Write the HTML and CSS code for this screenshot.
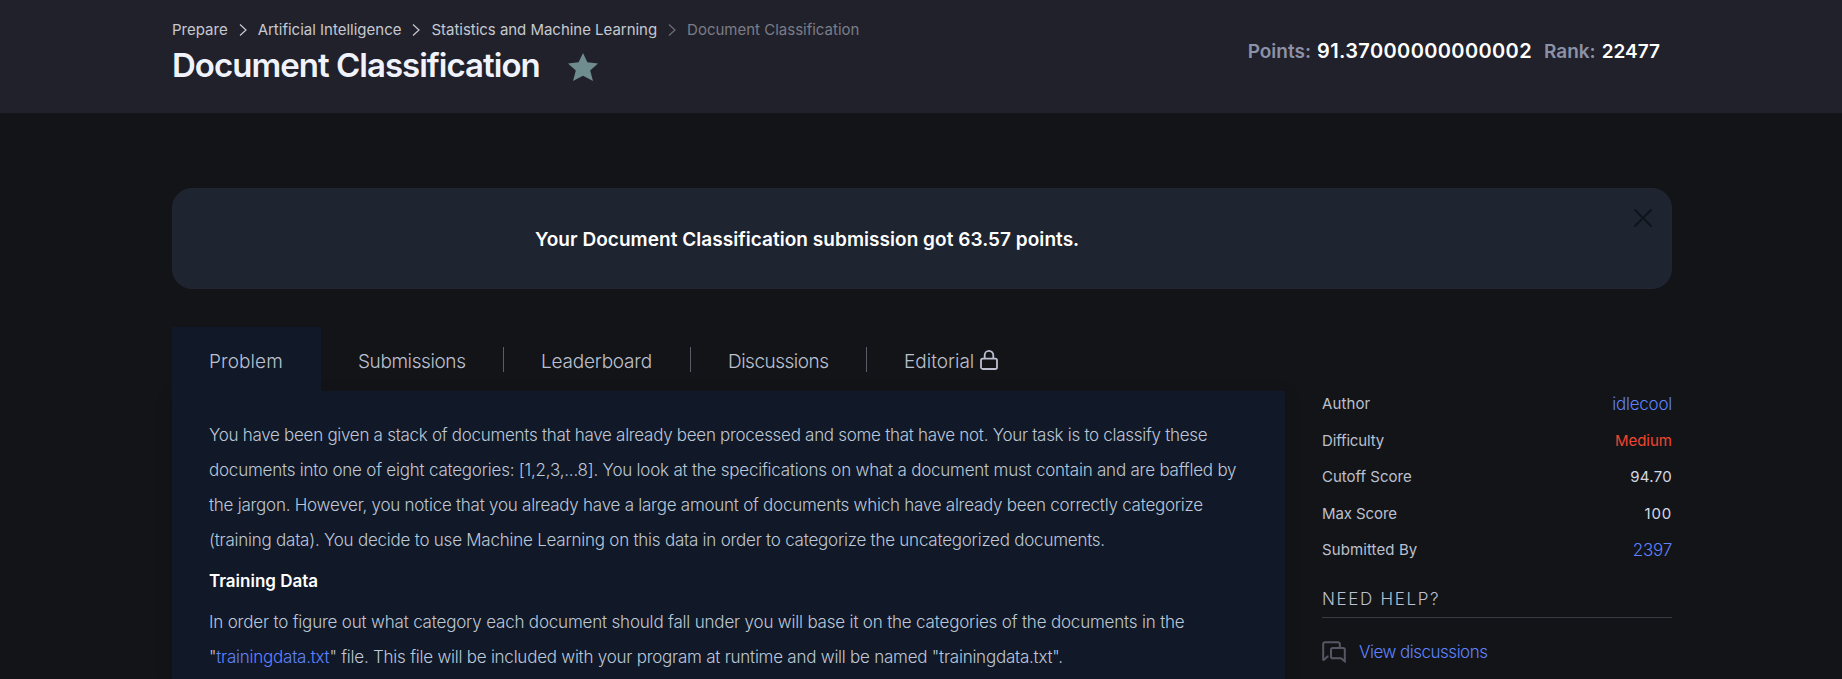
FILE: index.html
```html
<!DOCTYPE html>
<html lang="en">
<head>
<meta charset="utf-8">
<title>Document Classification</title>
<link rel="stylesheet" href="styles.css">
</head>
<body>
<header class="header">
  <div class="wrap header-row">
    <div>
      <nav class="crumbs">
        <a>Prepare</a>
        <svg class="chev" viewBox="0 0 8 12"><path d="M1 .5 7 6 1 11.5"/></svg>
        <a>Artificial Intelligence</a>
        <svg class="chev" viewBox="0 0 8 12"><path d="M1 .5 7 6 1 11.5"/></svg>
        <a class="c3">Statistics and Machine Learning</a>
        <svg class="chev dim" viewBox="0 0 8 12"><path d="M1 .5 7 6 1 11.5"/></svg>
        <span class="dim">Document Classification</span>
      </nav>
      <div class="title-row">
        <h1 class="title">Document Classification</h1>
        <svg class="star" viewBox="0 0 30 28"><path d="M15 0 19.4 9.3 30 10.5 22.2 17.6 25 28 15 22.8 5 28 7.8 17.6 0 10.5 10.6 9.3Z"/></svg>
      </div>
    </div>
    <div class="stats">
      <span class="stat-label">Points:</span><span class="stat-value points">91.37000000000002</span>
      <span class="stat-label">Rank:</span><span class="stat-value">22477</span>
    </div>
  </div>
</header>
<main class="wrap">
  <section class="banner">
    <p class="banner-text">Your Document Classification submission got 63.57 points.</p>
    <svg class="close" viewBox="0 0 20 20"><path d="M2 2 18 18M18 2 2 18"/></svg>
  </section>
  <div class="tabs">
    <a class="tab active t1">Problem</a>
    <a class="tab t2">Submissions</a>
    <a class="tab t3">Leaderboard</a>
    <a class="tab t4">Discussions</a>
    <a class="tab t5">Editorial<svg class="lock" viewBox="0 0 18 20"><rect x="1" y="8.7" width="16" height="10.3" rx="1.8"/><path d="M4.7 8.5V5.2a4.3 4.3 0 0 1 8.6 0v3.3"/></svg></a>
  </div>
  <div class="columns">
    <article class="panel">
      <p><span class="l1">You have been given a stack of documents that have already been processed and some that have not. Your task is to classify these</span>
      <span class="l2">documents into one of eight categories: [1,2,3,...8]. You look at the specifications on what a document must contain and are baffled by</span>
      <span class="l3">the jargon. However, you notice that you already have a large amount of documents which have already been correctly categorize</span>
      <span class="l4">(training data). You decide to use Machine Learning on this data in order to categorize the uncategorized documents.</span></p>
      <h2 class="subhead">Training Data</h2>
      <p><span class="l5">In order to figure out what category each document should fall under you will base it on the categories of the documents in the</span>
      <span class="l6">"<a class="link">trainingdata.txt</a>" file. This file will be included with your program at runtime and will be named "trainingdata.txt".</span></p>
    </article>
    <aside class="side">
      <dl class="facts">
        <div><dt class="f1">Author</dt><dd class="link big">idlecool</dd></div>
        <div><dt class="f2">Difficulty</dt><dd class="medium">Medium</dd></div>
        <div><dt>Cutoff Score</dt><dd class="score">94.70</dd></div>
        <div><dt class="f4">Max Score</dt><dd class="max">100</dd></div>
        <div><dt class="f1">Submitted By</dt><dd class="link big">2397</dd></div>
      </dl>
      <h3 class="help">NEED HELP?</h3>
      <a class="discuss link"><svg class="chat" viewBox="0 0 24 22"><path d="M1.2 19.5V3.2Q1.2 1.2 3.2 1.2H15.8Q17.8 1.2 17.8 3.2V6M1.2 19.5 5.5 15.5H6.5M10.8 6.9H21Q22.8 6.9 22.8 8.7V20.3L19 17.2H10.8Q9 17.2 9 15.4V8.7Q9 6.9 10.8 6.9Z"/></svg><span>View discussions</span></a>
    </aside>
  </div>
</main>
</body>
</html>
```
FILE: styles.css
```css
* { box-sizing: border-box; }
html, body { height: 100%; }
body {
  margin: 0;
  overflow: hidden;
  background: #131417;
  color: #bbc0d0;
  font-family: Inter, "Liberation Sans", sans-serif;
}
h1, h2, h3, p, dl, dd { margin: 0; }
svg { display: block; flex: none; fill: none; }
.wrap { width: 1500px; margin: 0 auto 0 172px; }

.header { height: 113px; background: #21212b; }
.header-row { display: flex; justify-content: space-between; }
.crumbs {
  display: flex;
  align-items: center;
  height: 20px;
  margin-top: 20px;
  font-size: 15px;
  line-height: 20px;
  color: #c6c9d0;
  white-space: nowrap;
}
.chev { width: 8px; height: 12px; margin: 0 11px; stroke: #c6c9d0; stroke-width: 1.2; }
.c3 { letter-spacing: -.03px; }
.crumbs .dim { color: #7b7d86; stroke: #6c6e78; }
.title-row { display: flex; align-items: center; height: 50px; }
.title {
  width: 396px;
  font-size: 33px;
  font-weight: 600;
  line-height: 50px;
  letter-spacing: -.98px;
  color: #f0f3fb;
  white-space: nowrap;
}
.star { width: 30px; height: 28px; margin-top: 3px; fill: #6f8c8f; }
.stats {
  display: flex;
  height: 40px;
  margin: 31px 12px 0 0;
  font-size: 19px;
  font-weight: 600;
  line-height: 41px;
}
.stat-label { margin-right: 6px; color: #8b92a8; }
.stat-value { color: #fff; }
.points { margin-right: 12px; font-size: 20px; letter-spacing: .37px; }

.banner {
  position: relative;
  height: 101px;
  margin-top: 75px;
  border: 1px solid #222632;
  border-radius: 20px;
  background: #1e2430;
}
.banner-text {
  padding-left: 362px;
  font-size: 19px;
  font-weight: 600;
  line-height: 101px;
  letter-spacing: .04px;
  color: #fff;
}
.close { position: absolute; top: 19px; right: 18px; width: 20px; height: 20px; stroke: #10141d; stroke-width: 2; stroke-linecap: round; }

.tabs { display: flex; height: 64px; margin-top: 38px; }
.tab {
  position: relative;
  display: flex;
  padding: 2px 0 0 37px;
  font-size: 19px;
  font-weight: 300;
  line-height: 66px;
}
.tab.active { background: #111827; }
.t1 { width: 149px; letter-spacing: .1px; }
.t2 { width: 183px; letter-spacing: -.4px; }
.t3 { width: 187px; letter-spacing: -.2px; }
.t4 { width: 176px; letter-spacing: -.5px; }
.t2::after, .t3::after, .t4::after {
  content: "";
  position: absolute;
  top: 20px;
  right: 0;
  width: 1px;
  height: 25px;
  background: #5a5d67;
}
.lock { width: 18px; height: 20px; margin: 21px 0 0 6px; stroke: #bbc0d0; stroke-width: 1.8; }

.columns { display: flex; gap: 37px; }
.panel {
  width: 1113px;
  height: 288px;
  padding: 27px 37px 0;
  background: #111827;
  box-shadow: 0 4px 16px rgba(0, 0, 0, .15);
  font-size: 17px;
  font-weight: 300;
  line-height: 35px;
  color: #bcc7d8;
  white-space: nowrap;
}
.panel span { display: block; }
.l1 { letter-spacing: -.29px; }
.l2 { letter-spacing: -.22px; }
.l3 { letter-spacing: -.25px; }
.l4 { letter-spacing: -.235px; }
.l5 { letter-spacing: -.19px; }
.l6 { letter-spacing: -.24px; }
.subhead { height: 47px; font-size: 17px; font-weight: 600; line-height: 46px; color: #fff; }
.link { color: #5f83ff; }

.side { width: 350px; }
.facts { margin-top: -5px; }
.facts div { display: flex; justify-content: space-between; height: 36.5px; font-size: 15px; line-height: 36px; }
.facts .big { font-size: 17px; font-weight: 300; letter-spacing: -.25px; }
.f1 { letter-spacing: .1px; }
.f2 { letter-spacing: -.15px; }
.f4 { letter-spacing: -.08px; }
.facts .medium { color: #f0452f; }
.facts .score { color: #d5d9e6; letter-spacing: .3px; }
.facts .max { color: #d5d9e6; letter-spacing: .8px; }
.help {
  height: 49px;
  border-bottom: 1px solid #393b43;
  font-size: 17px;
  font-weight: 300;
  line-height: 61px;
  letter-spacing: 1.65px;
}
.discuss {
  display: flex;
  align-items: center;
  height: 68px;
  font-size: 17px;
  font-weight: 300;
  letter-spacing: -.5px;
}
.chat { width: 24px; height: 22px; margin: 0 13px 0 0; stroke: #555863; stroke-width: 2; }
```
